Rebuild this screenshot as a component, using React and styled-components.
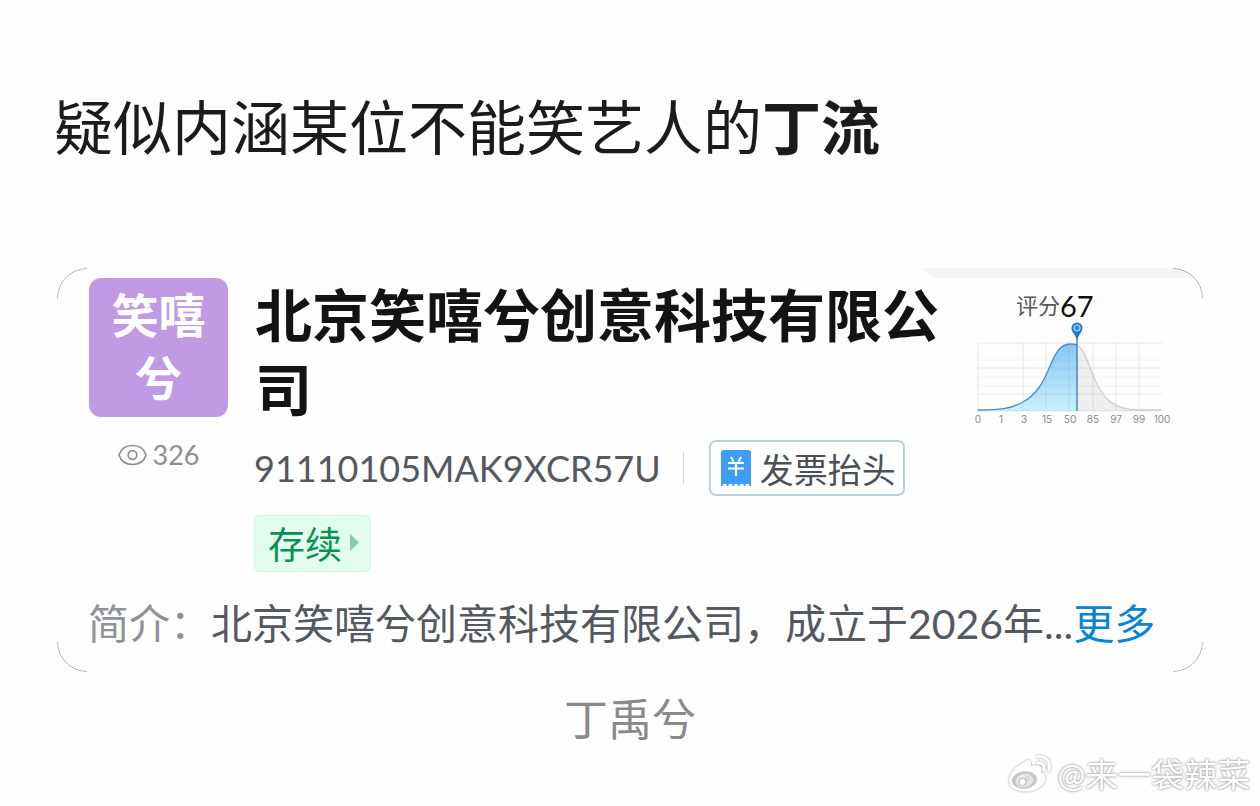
import React from "react";
import styled, { createGlobalStyle } from "styled-components";

const GlobalStyle = createGlobalStyle`
  * { box-sizing: border-box; }
  body {
    margin: 0;
    background: #fefefe;
    color: #1a1b1c;
    font-family: Lato, "Noto Sans CJK SC", sans-serif;
  }
`;

const Page = styled.main`
  display: flex;
  flex-direction: column;
  padding: 88px 57px 0;
`;

const Heading = styled.h1`
  margin: 0 -3px 100px;
  font-size: 59px;
  line-height: 80px;
  font-weight: 400;
`;

const Card = styled.section`
  position: relative;
  padding: 10px 29px 17px 32px;
  border-radius: 30px;
  overflow: hidden;
`;

const Strip = styled.svg`
  position: absolute;
  top: 0;
  right: 0;
  width: 280px;
  height: 10px;
`;

const Corner = styled.svg`
  position: absolute;
  width: 30px;
  height: 30px;
  fill: none;
  stroke: #8c8c8c;
  stroke-width: 0.7;
  ${({ $bottom }) => ($bottom ? "bottom: 0;" : "top: 0;")}
  ${({ $right }) => ($right ? "right: 0;" : "left: 0;")}
  transform: scale(${({ $right }) => ($right ? -1 : 1)}, ${({ $bottom }) => ($bottom ? -1 : 1)});
`;

const Summary = styled.div`
  display: grid;
  grid-template-columns: 139px minmax(0, 1fr) 202px;
  align-items: start;
`;

const Side = styled.div`
  display: flex;
  flex-direction: column;
  align-items: center;
  gap: 20px;
`;

const Avatar = styled.div`
  width: 139px;
  height: 139px;
  padding: 6px 20px;
  border-radius: 12px;
  background: #c09be3;
  color: #fff;
  font-size: 47px;
  line-height: 63px;
  font-weight: 700;
  text-align: center;
  display: flex;
  flex-direction: column;
  align-items: center;
`;

const Views = styled.div`
  display: flex;
  align-items: center;
  gap: 6px;
  color: #8b8f94;
  font-size: 27px;
  line-height: 36px;
`;

const Info = styled.div`
  padding: 0 0 0 27px;
`;

const Name = styled.h2`
  margin: 0 0 14px;
  font-size: 57px;
  line-height: 74px;
  font-weight: 700;
  color: #111314;
`;

const CodeRow = styled.div`
  display: flex;
  align-items: center;
  margin-left: -1px;
  white-space: nowrap;
`;

const Code = styled.span`
  color: #55585e;
  font-size: 36px;
  line-height: 56px;
`;

const Divider = styled.span`
  width: 1px;
  height: 32px;
  margin: 0 25px 0 22px;
  background: #d5d8db;
`;

const InvoiceButton = styled.button`
  display: flex;
  align-items: center;
  gap: 9px;
  height: 56px;
  padding: 0 7px 0 10px;
  border: 2px solid #b9d2df;
  border-radius: 7px;
  background: #fff;
  color: #4c4f54;
  font: inherit;
  font-size: 34px;
  white-space: nowrap;
`;

const Status = styled.button`
  display: flex;
  align-items: center;
  gap: 8px;
  height: 57px;
  margin: 19px 0 0 -1px;
  padding: 0 11px 2px 13px;
  border: 1px solid #d6f3e4;
  border-radius: 6px;
  background: #e2fdef;
  color: #07924f;
  font: inherit;
  font-size: 37px;
`;

const Score = styled.div`
  padding-top: 12px;
`;

const ScoreText = styled.div`
  display: flex;
  align-items: center;
  padding-left: 44px;
  color: #55595d;
  font-size: 22px;
  line-height: 32px;
`;

const ScoreValue = styled.strong`
  color: #111;
  font-size: 29px;
  font-weight: 400;
`;

const Chart = styled.svg`
  display: block;
  width: 202px;
  height: 106px;
  font-family: Inter, sans-serif;
  font-size: 10px;
  fill: #85898f;
`;

const Intro = styled.p`
  margin: 22px 0 1px -1px;
  color: #55595f;
  font-size: 41px;
  line-height: 60px;
  white-space: nowrap;
`;

const IntroLabel = styled.span`
  color: #8f9296;
`;

const More = styled.a`
  color: #0784d2;
  text-decoration: none;
`;

const Caption = styled.p`
  margin: 17px 0 4px;
  color: #8a8a8a;
  font-size: 44px;
  line-height: 60px;
  text-align: center;
`;

const Watermark = styled.footer`
  display: flex;
  align-items: center;
  justify-content: flex-end;
  gap: 5px;
  height: 42px;
  margin-right: -47px;
  color: #fff;
  font-size: 33px;
  line-height: 42px;
  text-shadow: 0 0 2px #999, 0 0 3px #aaa;
`;

const WeiboMark = styled.svg`
  width: 45px;
  height: 40px;
  filter: drop-shadow(0 0 1px #999);
`;

const ticks = ["0", "1", "3", "15", "50", "85", "97", "99", "100"];
const curveLeft = "M6 88C28 88 38 87 51 80C64 73 70 62 75 51C82 35 86 22 98 22Q102 22 105 23";
const curveRight = "M105 23C113 28 117 44 121 53C131 78 142 88 168 88H190";

function ScoreChart() {
  return (
    <Chart viewBox="0 0 202 106" role="img" aria-label="评分 67">
      <defs>
        <linearGradient id="area" x1="0" y1="0" x2="0" y2="1">
          <stop offset="0" stopColor="#86c6f7" />
          <stop offset="1" stopColor="#c9f1fd" />
        </linearGradient>
      </defs>
      <path d={`${curveLeft}V89H6Z`} fill="url(#area)" />
      <path d={`${curveRight}V89H105Z`} fill="#eeeeef" />
      <g stroke="#9aa0a8" strokeOpacity="0.22" strokeWidth="1">
        {[6, 51, 74, 97, 121, 144, 167].map((x) => <path key={x} d={`M${x} 21V89`} />)}
        {[21, 46, 72, 89].map((y) => <path key={y} d={`M6 ${y}H190`} />)}
        <path d="M6 38H190M6 55H190M6 64H190" strokeOpacity="0.1" />
      </g>
      <path d={curveRight} fill="none" stroke="#cfd0d3" strokeWidth="1.3" />
      <path d={curveLeft} fill="none" stroke="#4f8fbd" strokeWidth="1.4" />
      <path d="M105 10V89" stroke="#3d7fc0" strokeWidth="1.4" />
      <path d="M105 18C103 12 99.500 10 99.500 6a5.500 5.500 0 0 1 11 0C110.500 10 107 12 105 18Z" fill="#2477d3" />
      <circle cx="105" cy="6" r="3" fill="#2b8be6" stroke="#a5dcfb" strokeWidth="1.200" />
      {ticks.map((t, i) => (
        <text key={t} x={6 + i * 23} y="101" textAnchor="middle">{t}</text>
      ))}
    </Chart>
  );
}

function EyeIcon() {
  return (
    <svg width="29" height="22" viewBox="0 0 29 22" fill="none" stroke="#8b8f94" strokeWidth="1.700">
      <path d="M1 11C3 4.500 8 1.500 14.500 1.500S26 4.500 28 11C26 17.500 21 20.500 14.500 20.500S3 17.500 1 11Z" />
      <circle cx="14.500" cy="11" r="4.300" />
    </svg>
  );
}

function InvoiceIcon() {
  return (
    <svg width="30" height="36" viewBox="0 0 30 36">
      <path
        d="M3 0H27Q30 0 30 3V36H28.500a2.200 2.200 0 0 0-4.400 0H23a2.200 2.200 0 0 0-4.400 0H17.400a2.200 2.200 0 0 0-4.400 0H11.700a2.200 2.200 0 0 0-4.400 0H6a2.200 2.200 0 0 0-4.400 0H0V3Q0 0 3 0Z"
        fill="#3c9ff5"
      />
      <path d="M10 7L12.500 12M20 7L17.500 12M7 13H23M7 18.500H23M15 13V26" fill="none" stroke="#fff" strokeWidth="2.200" />
    </svg>
  );
}

function WeiboIcon() {
  return (
    <WeiboMark viewBox="0 0 45 40" fill="#fff" aria-hidden="true">
      <path d="M17 8C20 5 25 5 24 11C24 12 24 12 26 12C32 10 36 12 34 17C33.500 18 34 18.500 35 19C39 20.500 39.500 25 37 29C33 35 25 38 17 37.500C8 37 1.500 33 2 26C2.500 20 9 12 17 8Z" />
      <ellipse cx="17.500" cy="26" rx="12.500" ry="8.700" transform="rotate(-6 17.500 26)" fill="#c6c6c6" />
      <ellipse cx="17.500" cy="26.500" rx="9" ry="6.700" transform="rotate(-10 17.500 26.500)" fill="#e6e6e6" />
      <circle cx="15.500" cy="28" r="3.700" fill="#fff" stroke="#b5b5b5" />
      <circle cx="20.500" cy="24.500" r="1.500" fill="#fff" stroke="#b5b5b5" strokeWidth="0.8" />
      <path d="M31 9C35 8.500 37.500 11 36.500 15.500M30 3C38 1 44 7 42 16.500" fill="none" stroke="#fff" strokeWidth="3" strokeLinecap="round" />
    </WeiboMark>
  );
}

function CardCorner({ right, bottom }) {
  return (
    <Corner $right={right} $bottom={bottom} viewBox="0 0 30 30" aria-hidden="true">
      <path d="M0.500 30A29.500 29.500 0 0 1 30 0.500" />
    </Corner>
  );
}

export default function App() {
  return (
    <>
      <GlobalStyle />
      <Page>
        <Heading>疑似内涵某位不能笑艺人的<b>丁流</b></Heading>
        <Card>
          <Strip viewBox="0 0 280 10" preserveAspectRatio="none" aria-hidden="true">
            <path d="M0 0H280V10H18Q10 10 6 6Z" fill="#f2f4f6" />
          </Strip>
          <CardCorner />
          <CardCorner right />
          <CardCorner bottom />
          <CardCorner right bottom />
          <Summary>
            <Side>
              <Avatar><span>笑嘻</span><span>兮</span></Avatar>
              <Views><EyeIcon />326</Views>
            </Side>
            <Info>
              <Name>北京笑嘻兮创意科技有限公司</Name>
              <CodeRow>
                <Code>91110105MAK9XCR57U</Code>
                <Divider />
                <InvoiceButton type="button"><InvoiceIcon />发票抬头</InvoiceButton>
              </CodeRow>
              <Status type="button">
                存续
                <svg width="9" height="17" viewBox="0 0 9 17"><path d="M0 0L9 8.500L0 17Z" fill="#83cdac" /></svg>
              </Status>
            </Info>
            <Score>
              <ScoreText>评分<ScoreValue>67</ScoreValue></ScoreText>
              <ScoreChart />
            </Score>
          </Summary>
          <Intro>
            <IntroLabel>简介：</IntroLabel>北京笑嘻兮创意科技有限公司，成立于2026年...<More href="#more">更多</More>
          </Intro>
        </Card>
        <Caption>丁禹兮</Caption>
        <Watermark><WeiboIcon />@来一袋辣菜</Watermark>
      </Page>
    </>
  );
}
